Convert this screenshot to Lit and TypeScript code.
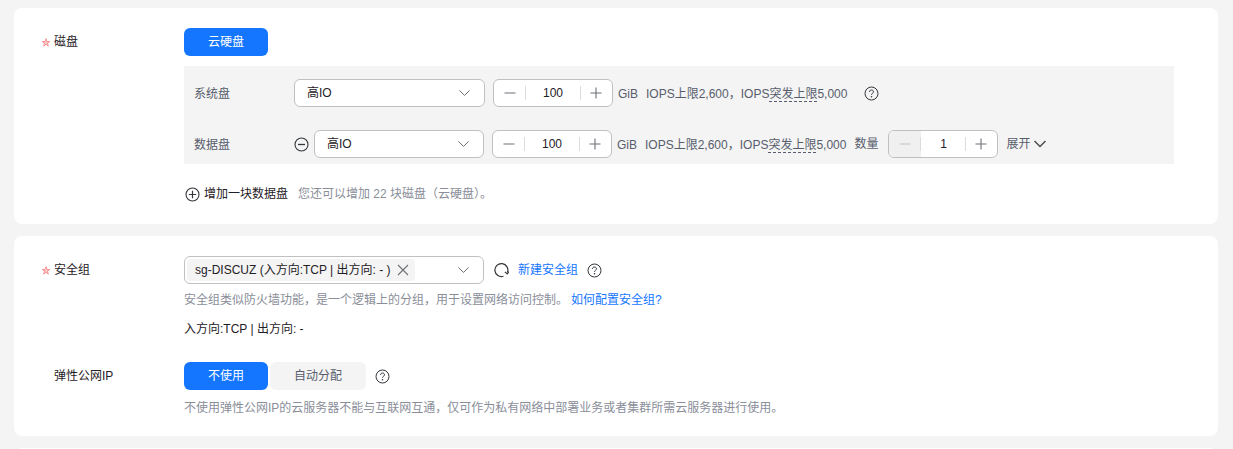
import { LitElement, html, css, svg } from "lit";
import { customElement } from "lit/decorators.js";

const chevron = html`<svg class="chev" width="11" height="6" viewBox="0 0 11 6"><path d="M.4.400 5.500 5.400 10.600.400" fill="none" stroke="#6d7076" stroke-width="1"/></svg>`;
const minus = html`<svg class="glyph" width="12" height="12" viewBox="0 0 12 12"><path d="M.5 6h11" stroke="#6d7076" stroke-width="1.200" fill="none"/></svg>`;
const minusOff = html`<svg class="glyph" width="12" height="12" viewBox="0 0 12 12"><path d="M.5 6h11" stroke="#c4c4c4" stroke-width="1.200" fill="none"/></svg>`;
const plus = html`<svg class="glyph" width="12" height="12" viewBox="0 0 12 12"><path d="M.5 6h11M6 .5v11" stroke="#6d7076" stroke-width="1.100" fill="none"/></svg>`;
const help = html`<svg class="help" width="15" height="15" viewBox="0 0 15 15"><circle cx="7.500" cy="7.500" r="6.500" fill="none" stroke="#33363b" stroke-width="1"/><path d="M5.500 6c0-1.300.9-2 2-2s2 .7 2 1.800c0 1.500-2 1.500-2 3" fill="none" stroke="#33363b" stroke-width="1"/><circle cx="7.500" cy="10.800" r=".8" fill="#33363b"/></svg>`;
const circ = (inner: unknown) => html`<svg width="15" height="15" viewBox="0 0 15 15"><circle cx="7.500" cy="7.500" r="6.500" fill="none" stroke="#33363b" stroke-width="1.100"/>${inner}</svg>`;
const star = html`<svg class="star" width="8" height="9" viewBox="0 0 8 9"><path d="M4 .6 5 3.500h2.800L5.500 5.200l.9 3L4 6.400 1.600 8.200l.9-3L.2 3.500H3z" fill="#fcc4c2" stroke="#f5666a" stroke-width=".6"/></svg>`;

@customElement("app-root")
export class AppRoot extends LitElement {
  static styles = css`
    :host { display: block; height: 449px; overflow: hidden; background: #f4f4f4; color: #1f2126;
      font: 12px/18px "Liberation Sans", "Noto Sans CJK SC", sans-serif; }
    .page { display: flex; flex-direction: column; gap: 12px; padding: 8px 15px 0 14px; }
    .card { background: #fff; border-radius: 8px; padding: 20px 0 0 28px; display: flex; flex-direction: column; }
    .c1 { height: 196px; }
    .c2 { height: 180px; }
    .c3 { height: 40px; }
    .row { display: flex; }
    .label { width: 142px; flex: none; height: 28px; display: flex; align-items: center; color: #1f2126; padding-left: 12px; box-sizing: border-box; position: relative; }
    .star { position: absolute; left: 0; top: 10px; }
    .content { display: flex; flex-direction: column; flex: none; width: 990px; }
    .btn { width: 84px; height: 28px; border-radius: 6px; background: #1476ff; color: #fff; display: flex; align-items: center; justify-content: center; }
    .panel { background: #f4f4f4; margin-top: 10px; padding: 13px 0 6px 10px; display: flex; flex-direction: column; gap: 23px; }
    .prow { display: flex; align-items: center; height: 28px; color: #575d6c; }
    .pl { width: 100px; flex: none; color: #575d6c; padding-top: 2px; }
    .select { width: 191px; height: 28px; box-sizing: border-box; border: 1px solid #c0c0c0; border-radius: 6px; background: #fff; display: flex; align-items: center; justify-content: space-between; padding: 0 14px 0 12px; color: #1f2126; }
    .select.s2 { width: 170px; margin-left: 5px; }
    .stepper { width: 120px; height: 28px; box-sizing: border-box; border: 1px solid #c0c0c0; border-radius: 6px; background: #fff; margin-left: 8px; display: grid; grid-template-columns: 32px 1fr 32px; align-items: center; overflow: hidden; }
    .stepper.n { width: 110px; margin-left: 10px; }
    .cell { height: 100%; display: flex; align-items: center; justify-content: center; }
    .cell.l, .cell.r { position: relative; }
    .cell.l::after, .cell.r::before { content: ""; position: absolute; top: 6px; height: 14px; width: 1px; background: #dcdcdc; }
    .cell.l::after { right: 0; }
    .cell.r::before { left: 0; }
    .cell.off { background: #f0f0f0; }
    .val { text-align: center; color: #1f2126; }
    .info { margin-left: 5px; white-space: nowrap; color: #575d6c; padding-top: 2px; }
    .sp { display: inline-block; width: 8px; }
    .dash { border-bottom: 1px dashed #575d6c; line-height: 14px; display: inline-block; }
    .help { flex: none; }
    .info + .help { margin-left: 17px; }
    .count { margin-left: 8px; color: #575d6c; }
    .expand { margin-left: 8px; color: #575d6c; display: flex; align-items: center; gap: 3px; }
    .add { display: flex; align-items: center; height: 18px; margin-top: 21px; margin-left: 1px; color: #1f2126; }
    .add svg { margin-right: 4px; }
    .muted { color: #8a8e99; }
    .add .muted { margin-left: 10px; }
    .sel2 { width: 300px; height: 28px; box-sizing: border-box; border: 1px solid #c0c0c0; border-radius: 6px; display: flex; align-items: center; justify-content: space-between; padding: 0 14px 0 2px; }
    .tag { height: 22px; width: 228px; box-sizing: border-box; background: #f4f4f4; border-radius: 4px; display: flex; align-items: center; justify-content: space-between; padding: 0 6px 0 8px; white-space: nowrap; color: #1f2126; }
    .sgline { display: flex; align-items: center; }
    .sgline .refresh { margin-left: 9px; }
    .link { color: #1476ff; }
    .sgline .link { margin-left: 9px; }
    .sgline .help { margin-left: 9px; }
    .hint { margin-top: 7px; color: #8a8e99; height: 18px; }
    .hint .link { margin-left: 3px; }
    .dir { margin-top: 11px; height: 18px; }
    .eip { margin-top: 24px; }
    .seg { display: flex; align-items: center; }
    .opt { width: 96px; height: 28px; margin-left: 2px; background: #f4f4f4; border-radius: 6px; color: #575d6c; display: flex; align-items: center; justify-content: center; }
    .seg .help { margin-left: 9px; }
    .eip-hint { margin-top: 9px; color: #8a8e99; height: 18px; }
  `;

  render() {
    const infoText = html`GiB<span class="sp"></span>IOPS上限2,600，IOPS<span class="dash">突发上限</span>5,000`;
    return html`<div class="page">
      <section class="card c1">
        <div class="row">
          <div class="label">${star}磁盘</div>
          <div class="content">
            <div class="btn">云硬盘</div>
            <div class="panel">
              <div class="prow">
                <div class="pl">系统盘</div>
                <div class="select">高IO ${chevron}</div>
                <div class="stepper"><div class="cell l">${minus}</div><div class="val">100</div><div class="cell r">${plus}</div></div>
                <div class="info">${infoText}</div>
                ${help}
              </div>
              <div class="prow">
                <div class="pl">数据盘</div>
                ${circ(svg`<path d="M4 7.500h7" stroke="#33363b" stroke-width="1.300"/>`)}
                <div class="select s2">高IO ${chevron}</div>
                <div class="stepper"><div class="cell l">${minus}</div><div class="val">100</div><div class="cell r">${plus}</div></div>
                <div class="info">${infoText}</div>
                <div class="count">数量</div>
                <div class="stepper n"><div class="cell l off">${minusOff}</div><div class="val">1</div><div class="cell r">${plus}</div></div>
                <div class="expand">展开 <svg width="14" height="14" viewBox="0 0 14 14"><path d="M1.500 4 7 9.500 12.500 4" fill="none" stroke="#4a4e55" stroke-width="1.500"/></svg></div>
              </div>
            </div>
            <div class="add">${circ(svg`<path d="M3.800 7.500h7.400M7.500 3.800v7.400" stroke="#33363b" stroke-width="1.200"/>`)}增加一块数据盘<span class="muted">您还可以增加 22 块磁盘（云硬盘）。</span></div>
          </div>
        </div>
      </section>
      <section class="card c2">
        <div class="row">
          <div class="label">${star}安全组</div>
          <div class="content">
            <div class="sgline">
              <div class="sel2"><div class="tag">sg-DISCUZ (入方向:TCP | 出方向: - ) <svg width="12" height="12" viewBox="0 0 12 12"><path d="M1 1l10 10M11 1 1 11" stroke="#6d7076" stroke-width="1.100" fill="none"/></svg></div>${chevron}</div>
              <svg class="refresh" width="16" height="16" viewBox="0 0 16 16"><path d="M10.500 14.200A6.500 6.500 0 1 1 14.400 10.500" fill="none" stroke="#33363b" stroke-width="1.200"/><path d="M11.800 9.800 14.300 12 16 9.600" fill="none" stroke="#33363b" stroke-width="1.100"/></svg>
              <span class="link">新建安全组</span>
              ${help}
            </div>
            <div class="hint">安全组类似防火墙功能，是一个逻辑上的分组，用于设置网络访问控制。<span class="link">如何配置安全组?</span></div>
            <div class="dir">入方向:TCP | 出方向: -</div>
          </div>
        </div>
        <div class="row eip">
          <div class="label">弹性公网IP</div>
          <div class="content">
            <div class="seg"><div class="btn">不使用</div><div class="opt">自动分配</div>${help}</div>
            <div class="eip-hint">不使用弹性公网IP的云服务器不能与互联网互通，仅可作为私有网络中部署业务或者集群所需云服务器进行使用。</div>
          </div>
        </div>
      </section>
      <section class="card c3"></section>
    </div>`;
  }
}
